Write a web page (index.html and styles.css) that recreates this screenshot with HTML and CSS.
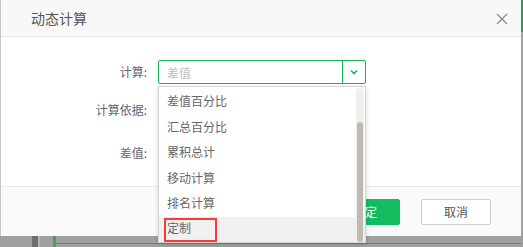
FILE: index.html
```html
<!DOCTYPE html>
<html lang="zh">
<head>
<meta charset="utf-8">
<title>动态计算</title>
<link rel="stylesheet" href="styles.css">
</head>
<body>
<div class="screen">
  <div class="dialog">
    <div class="dlg-header">
      <span class="dlg-title">动态计算</span>
      <svg class="dlg-close" width="12" height="12" viewBox="0 0 12 12"><path d="M1 1L11 11M11 1L1 11" stroke="#8a8a8a" stroke-width="1.2" fill="none"/></svg>
    </div>
    <div class="dlg-body">
      <div class="form-row row-calc">
        <label class="form-label">计算:</label>
        <div class="select-wrap">
          <div class="select">
            <span class="select-value">差值</span>
            <span class="select-arrow">
              <svg width="8" height="6" viewBox="0 0 8 6"><path d="M1 1.5L4 4.5L7 1.5" stroke="#19b35a" stroke-width="1.6" fill="none"/></svg>
            </span>
          </div>
          <div class="dropdown">
            <ul class="dd-list">
              <li class="dd-item">差值百分比</li>
              <li class="dd-item">汇总百分比</li>
              <li class="dd-item">累积总计</li>
              <li class="dd-item">移动计算</li>
              <li class="dd-item">排名计算</li>
              <li class="dd-item dd-active">定制</li>
            </ul>
            <div class="dd-track"><div class="dd-thumb"></div></div>
            <div class="dd-mark"></div>
          </div>
        </div>
      </div>
      <div class="form-row row-basis">
        <label class="form-label">计算依据:</label>
      </div>
      <div class="form-row row-diff">
        <label class="form-label">差值:</label>
      </div>
    </div>
    <div class="dlg-footer">
      <button class="btn btn-primary">确定</button>
      <button class="btn btn-default">取消</button>
    </div>
  </div>
  <div class="side-edge"><div class="side-green"></div></div>
  <div class="strip">
    <div class="strip-gap a"></div>
    <div class="strip-dark"></div>
    <div class="strip-light"></div>
    <div class="strip-gap b"></div>
    <div class="strip-green"></div>
    <div class="strip-rest"><div class="strip-line"></div></div>
  </div>
  <div class="strip-end"></div>
</div>
</body>
</html>
```
FILE: styles.css
```css
* { box-sizing: border-box; }
html, body { margin: 0; padding: 0; }
body {
  width: 523px;
  height: 247px;
  overflow: hidden;
  background: #9d9d9d;
  font-family: "Noto Sans CJK SC", "Noto Sans", sans-serif;
}
.screen {
  display: grid;
  grid-template-columns: 521px 2px;
  grid-template-rows: 236px 11px;
}
.dialog {
  display: flex;
  flex-direction: column;
  background: #fff;
  border-left: 1px solid #c8c8c8;
  position: relative;
}
.dlg-header {
  height: 37px;
  background: #f8f8f8;
  border-bottom: 1px solid #e6e6e6;
  display: flex;
  align-items: center;
  justify-content: space-between;
  padding: 0 13px 0 30px;
}
.dlg-title {
  font-size: 14px;
  color: #555;
  line-height: 1;
  margin-top: -1px;
}
.dlg-close { display: block; margin-top: 1px; }
.dlg-body {
  flex: 1;
  padding-top: 23px;
}
.form-row {
  display: flex;
  align-items: center;
}
.form-label {
  width: 147px;
  text-align: right;
  font-size: 12px;
  color: #666;
  padding-right: 1px;
  line-height: 24px;
}
.row-basis { margin-top: 14px; }
.row-diff { margin-top: 19px; }
.select-wrap {
  margin-left: 10px;
  position: relative;
}
.select {
  width: 208px;
  height: 24px;
  border: 1px solid #19b35a;
  border-radius: 2px;
  display: flex;
  align-items: center;
  background: #fff;
}
.select-value {
  flex: 1;
  padding-left: 8px;
  font-size: 12px;
  color: #bdbdbd;
}
.select-arrow {
  width: 23px;
  height: 100%;
  border-left: 1px solid #19b35a;
  display: flex;
  align-items: center;
  justify-content: center;
}
.select-arrow svg { display: block; }
.dropdown {
  position: absolute;
  left: 0;
  top: 26px;
  width: 208px;
  height: 157px;
  background: #fff;
  border: 1px solid #d6d6d6;
  box-shadow: 0 1px 4px rgba(0,0,0,0.18);
  z-index: 5;
  overflow: hidden;
}
.dd-list {
  list-style: none;
  margin: 0;
  padding: 0;
  padding-top: 1px;
}
.dd-item {
  height: 25.6px;
  line-height: 25.6px;
  padding-left: 8px;
  font-size: 12px;
  color: #666;
}
.dd-active {
  background: #f0f0f0;
  margin-top: 1px;
  height: 25px;
  line-height: 22px;
}
.dd-track {
  position: absolute;
  right: 1px;
  top: 1px;
  width: 8px;
  height: 155px;
  background: #f0efed;
  border-radius: 4px;
}
.dd-thumb {
  position: absolute;
  left: 1px;
  right: 1px;
  top: 34px;
  bottom: 1px;
  background: #bebab2;
  border-radius: 3px;
}
.dd-mark {
  position: absolute;
  left: 5px;
  top: 131px;
  width: 53px;
  height: 24px;
  border: 2px solid #f53b3b;
}
.dlg-footer {
  height: 50px;
  background: #fafafa;
  border-top: 1px solid #e8e8e8;
  display: flex;
  justify-content: flex-end;
  align-items: center;
  gap: 21px;
  padding-right: 30px;
}
.btn {
  width: 70px;
  height: 26px;
  border-radius: 2px;
  font-size: 12px;
  font-family: inherit;
  padding: 0;
  cursor: pointer;
}
.btn-primary {
  background: #13bd5f;
  border: 1px solid #13bd5f;
  color: #fff;
}
.btn-default {
  background: #fff;
  border: 1px solid #cfcfcf;
  color: #555;
}
.side-edge {
  background: #a2a2a2;
}
.side-green {
  height: 32px;
  background: #3c8f4e;
}
.strip {
  display: flex;
  background: #a0a0a0;
}
.strip-gap.a { width: 32px; }
.strip-dark { width: 6px; background: #6f6f6f; }
.strip-light { width: 2px; background: #b4b4b4; }
.strip-gap.b { width: 13px; }
.strip-green { width: 3px; background: #4f9d5c; }
.strip-rest { flex: 1; }
.strip-line { margin-top: 7px; height: 1px; background: #5f8f62; }
.strip-end { background: #a0a0a0; }
```
